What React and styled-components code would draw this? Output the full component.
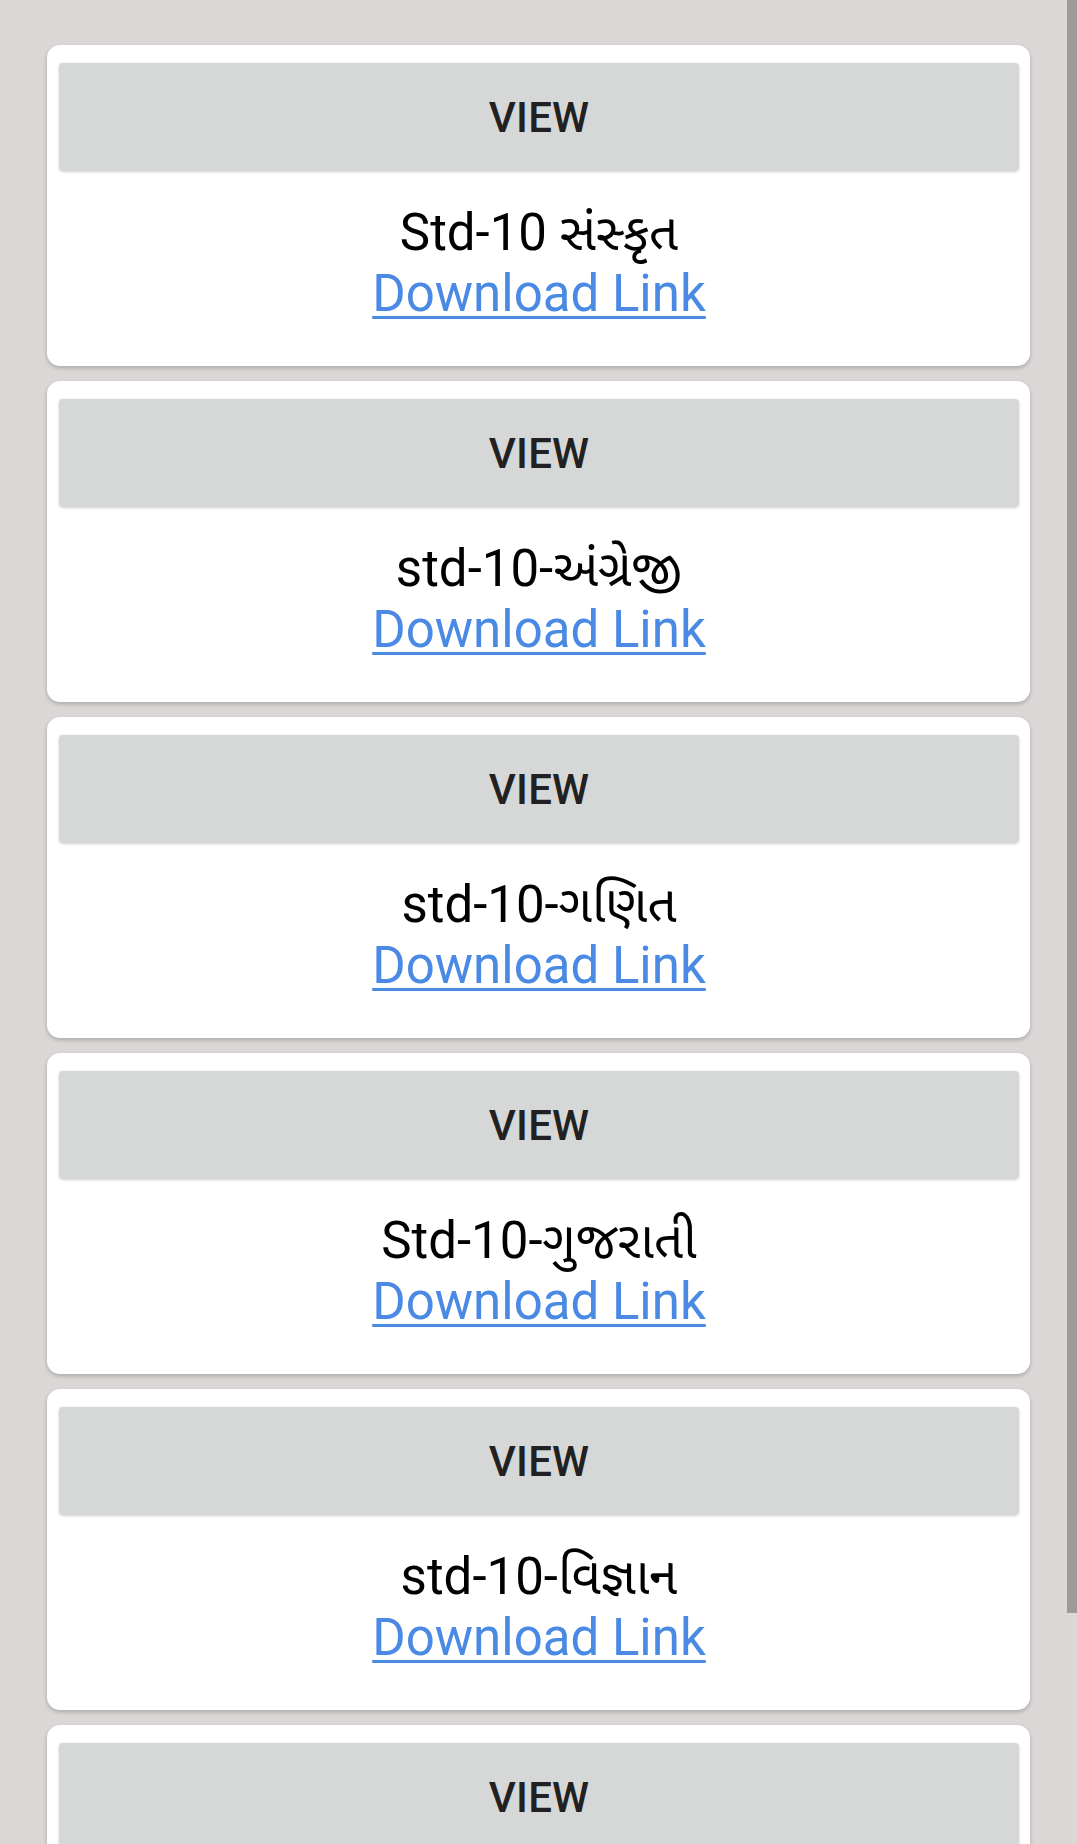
import React from "react";
import styled, { createGlobalStyle } from "styled-components";

const GlobalStyle = createGlobalStyle`
  html, body {
    margin: 0;
    padding: 0;
    background: #dcd7d7;
    overflow: hidden;
  }
  body {
    font-family: Roboto, "Noto Sans", "Noto Sans Gujarati", sans-serif;
  }
`;

const Page = styled.div`
  display: flex;
  height: 100vh;
  background: #dcd7d7;
`;

const List = styled.main`
  flex: 1;
  overflow: hidden;
  display: flex;
  flex-direction: column;
  gap: 15px;
  padding: 45px 37px 47px 47px;
`;

const ScrollTrack = styled.div`
  width: 10px;
  flex-shrink: 0;
  background: #dcd7d7;
`;

const ScrollThumb = styled.div`
  height: ${props => props.size}px;
  background: #9e9a9a;
`;

const Card = styled.section`
  flex-shrink: 0;
  background: #fff;
  border-radius: 13px;
  box-shadow: 0 2px 4px rgba(0, 0, 0, 0.22);
  padding: 18px 11px 42px 12px;
  display: flex;
  flex-direction: column;
  align-items: center;
`;

const ViewButton = styled.button`
  align-self: stretch;
  height: 108px;
  border: none;
  border-radius: 4px;
  background: #d6d7d7;
  box-shadow: 0 1px 3px rgba(0, 0, 0, 0.18);
  color: #212121;
  font-family: Roboto, sans-serif;
  font-weight: 500;
  font-size: 42px;
  letter-spacing: 0.2px;
  text-transform: uppercase;
  margin-bottom: 31px;
  cursor: pointer;
`;

const Title = styled.div`
  font-size: 51px;
  line-height: 61px;
  color: #000;
  text-align: center;
`;

const DownloadLink = styled.a`
  font-size: 51px;
  line-height: 61px;
  color: #4a89e4;
  text-decoration: underline;
  text-decoration-thickness: 3px;
  text-underline-offset: 5px;
`;

const files = [
  "Std-10 સંસ્કૃત",
  "std-10-અંગ્રેજી",
  "std-10-ગણિત",
  "Std-10-ગુજરાતી",
  "std-10-વિજ્ઞાન",
  "std-10-સામાજિક વિજ્ઞાન",
];

export default function App() {
  return (
    <Page>
      <GlobalStyle />
      <List>
        {files.map(name => (
          <Card key={name}>
            <ViewButton>View</ViewButton>
            <Title>{name}</Title>
            <DownloadLink href="#">Download Link</DownloadLink>
          </Card>
        ))}
      </List>
      <ScrollTrack>
        <ScrollThumb size={1613} />
      </ScrollTrack>
    </Page>
  );
}
